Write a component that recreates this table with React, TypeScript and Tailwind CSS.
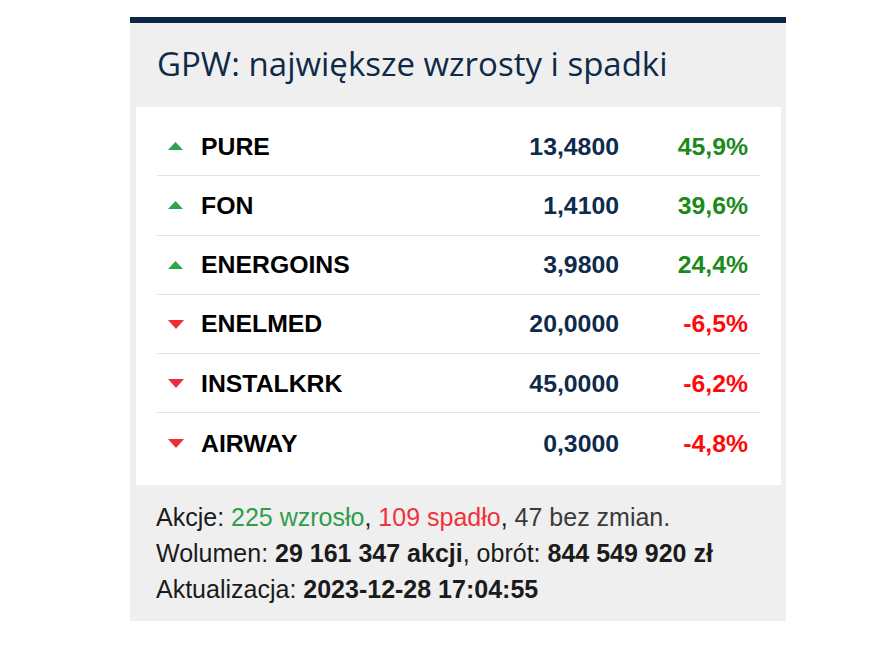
import React from 'react';

interface Mover {
  symbol: string;
  price: string;
  change: string;
  up: boolean;
}

const movers: Mover[] = [
  { symbol: 'PURE', price: '13,4800', change: '45,9%', up: true },
  { symbol: 'FON', price: '1,4100', change: '39,6%', up: true },
  { symbol: 'ENERGOINS', price: '3,9800', change: '24,4%', up: true },
  { symbol: 'ENELMED', price: '20,0000', change: '-6,5%', up: false },
  { symbol: 'INSTALKRK', price: '45,0000', change: '-6,2%', up: false },
  { symbol: 'AIRWAY', price: '0,3000', change: '-4,8%', up: false },
];

function Arrow({ up }: { up: boolean }) {
  return up ? (
    <svg width="15" height="8" viewBox="0 0 15 8" className="block">
      <polygon points="7.5,0 15,8 0,8" fill="#2ea44f" />
    </svg>
  ) : (
    <svg width="16" height="9" viewBox="0 0 16 9" className="block">
      <polygon points="0,0 16,0 8,9" fill="#ee2d3c" />
    </svg>
  );
}

export default function App() {
  return (
    <div className="min-h-screen bg-white pt-[17px]">
      <div className="ml-[130px] w-[656px] bg-[#efefef] border-t-[6px] border-[#0b2646]">
        <div className="h-[84px] flex items-center pl-[27px]">
          <h2 className="text-[33px] leading-none font-medium text-[#0e2a47] font-['Open_Sans',sans-serif] -mt-[4px]">
            GPW: największe wzrosty i spadki
          </h2>
        </div>

        <div className="ml-[6px] mr-[5px] bg-white px-[21px] pt-[10px] pb-[12px]">
          <div className="divide-y divide-[#e2e2e2] font-['Liberation_Sans',Arial,sans-serif] font-bold text-[24.8px]">
            {movers.map((m) => (
              <div key={m.symbol} className="h-[59.3px] flex items-center">
                <div className="w-[44px] pl-[11px] flex items-center">
                  <Arrow up={m.up} />
                </div>
                <div className="flex-1 text-black">{m.symbol}</div>
                <div className="text-right text-[#0f2b4c]">{m.price}</div>
                <div
                  className={`w-[141px] pr-[12px] text-right ${m.up ? 'text-[#1b8a1b]' : 'text-[#ff0a0a]'}`}
                >
                  {m.change}
                </div>
              </div>
            ))}
          </div>
        </div>

        <div className="pl-[26px] pt-[14px] pb-[14px] font-['Liberation_Sans',Arial,sans-serif] text-[25px] leading-[36px] text-[#1b1b1b] whitespace-nowrap">
          <p>
            Akcje: <span className="text-[#2e9e4a]">225 wzrosło</span>,{' '}
            <span className="text-[#f0323c]">109 spadło</span>,{' '}
            <span className="text-[#3a3a3a]">47 bez zmian.</span>
          </p>
          <p>
            Wolumen: <b className="font-bold">29 161 347 akcji</b>, obrót:{' '}
            <b className="font-bold">844 549 920 zł</b>
          </p>
          <p>
            Aktualizacja: <b className="font-bold">2023-12-28 17:04:55</b>
          </p>
        </div>
      </div>
    </div>
  );
}
